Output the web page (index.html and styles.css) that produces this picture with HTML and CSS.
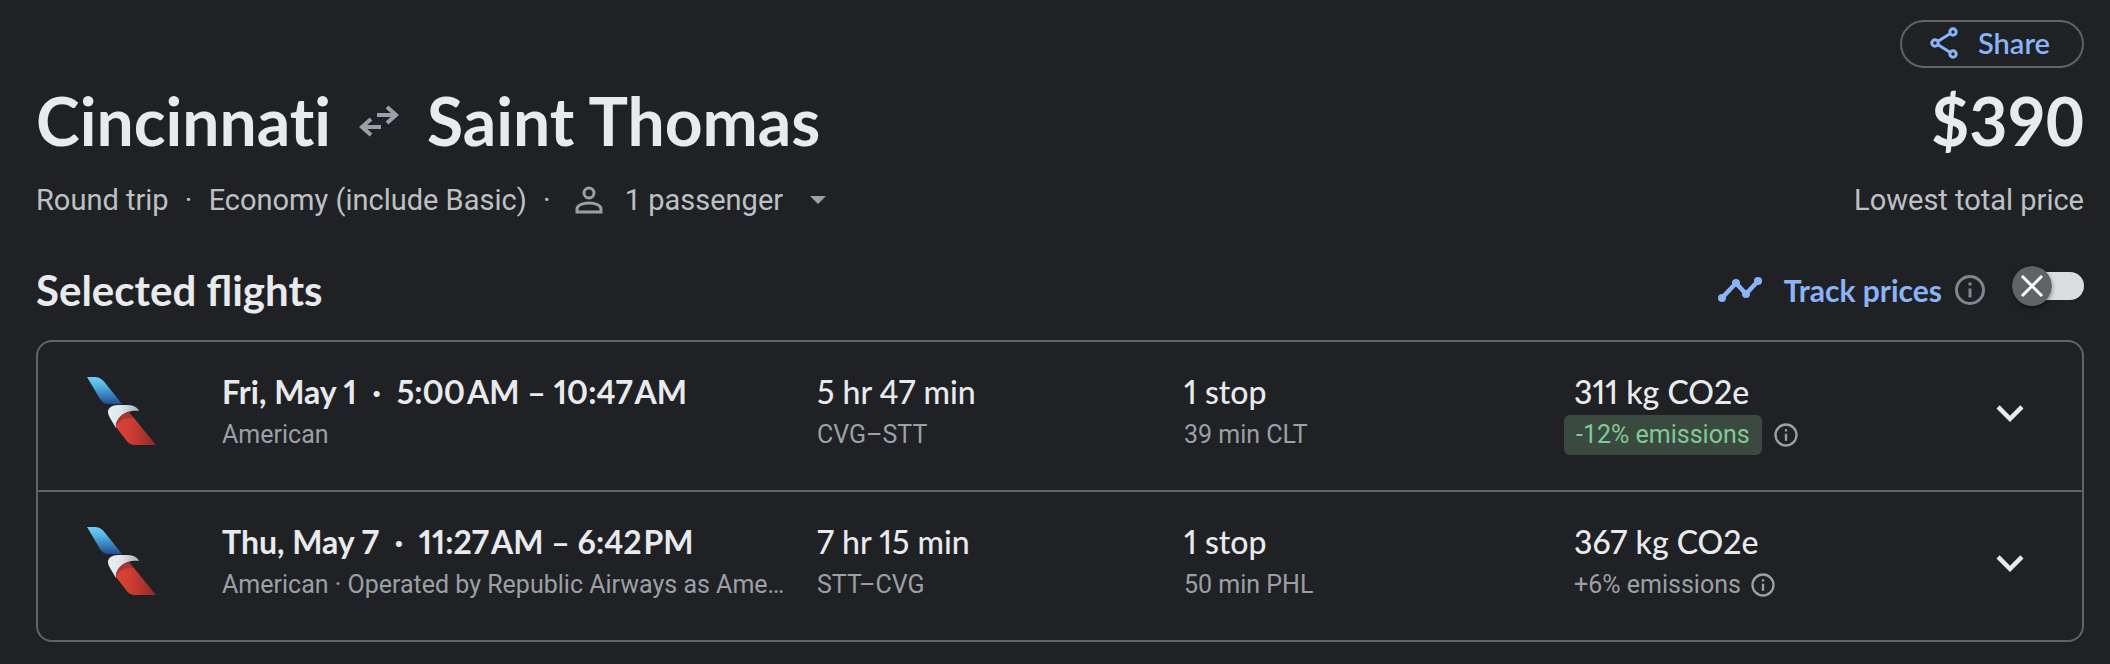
FILE: index.html
```html
<!DOCTYPE html>
<html lang="en">
<head>
<meta charset="utf-8">
<title>Cincinnati to Saint Thomas</title>
<link rel="stylesheet" href="styles.css">
</head>
<body>
<svg class="defs" aria-hidden="true">
  <defs>
    <linearGradient id="tail" x1="0" y1="0" x2="0" y2="1"><stop offset="0" stop-color="#6fcdf5"/><stop offset=".3" stop-color="#56b8e8"/><stop offset="1" stop-color="#1f4f93"/></linearGradient>
    <linearGradient id="beak" x1="0" y1="0" x2="1" y2="0"><stop offset="0" stop-color="#e9edf6"/><stop offset=".4" stop-color="#e1e6ee"/><stop offset="1" stop-color="#a3b0b8"/></linearGradient>
    <linearGradient id="wing" x1="0" y1="0" x2="1" y2="0"><stop offset="0" stop-color="#dc4437"/><stop offset=".4" stop-color="#cb3c33"/><stop offset="1" stop-color="#8c2a28"/></linearGradient>
    <symbol id="logo" viewBox="0 0 70 70">
      <path fill="url(#tail)" d="M1 1h8c5 0 8 3 11 7l16 20H22c-3 0-6-2-8-5z"/>
      <path fill="url(#beak)" d="M22 36c0-4 4-7 10-7h7c7 0 12 1 14 6-9-1-15 2-19 6-3 3-4 7-4 11l-6-10c-1-2-2-4-2-6z"/>
      <path fill="#a93430" d="M30 52c-1-7 4-14 13-16l5 6c-9-1-14 3-18 10z"/>
      <path fill="url(#wing)" d="M30 51c3-6 8-10 18-9l22 27H50c-5 0-8-2-10-5z"/>
    </symbol>
    <symbol id="info" viewBox="0 0 24 24"><path fill="currentColor" d="M11 7h2v2h-2zm0 4h2v6h-2zm1-9a10 10 0 1 0 0 20 10 10 0 0 0 0-20zm0 18a8 8 0 1 1 0-16 8 8 0 0 1 0 16z"/></symbol>
    <symbol id="chevron" viewBox="0 0 24 24"><path fill="currentColor" d="M7.41 8.59 12 13.17l4.59-4.58L18 10l-6 6-6-6z"/></symbol>
  </defs>
</svg>
<main class="page">
  <div class="actions">
    <button class="share" type="button">
      <svg class="share-icon" viewBox="0 0 28 32" aria-hidden="true"><g fill="none" stroke="currentColor" stroke-width="3"><circle cx="5" cy="16" r="3.2"/><circle cx="23" cy="5" r="3.2"/><circle cx="23" cy="27" r="3.2"/><path d="m8 14.300 12-7.500M8 17.700l12 7.500"/></g></svg>
      Share
    </button>
  </div>
  <header class="trip">
    <h1 class="title">Cincinnati
      <svg class="swap" viewBox="0 0 40 32" aria-label="to and from" role="img"><g fill="none" stroke="currentColor" stroke-width="4"><path d="M18 10h19M28 2l9 8-9 8M22 22H3M12 14l-9 8 9 8"/></g></svg>
      Saint Thomas</h1>
    <p class="price">$390</p>
  </header>
  <div class="details">
    <span>Round trip</span><span class="dot">·</span><span>Economy (include Basic)</span><span class="dot">·</span>
    <label class="passengers">
      <svg class="person" viewBox="0 0 28 28" aria-hidden="true"><g fill="none" stroke="currentColor" stroke-width="3"><circle cx="14" cy="7" r="5"/><path d="M2 26v-3c0-4 6-6 12-6s12 2 12 6v3z"/></g></svg>
      <select class="passenger-select" aria-label="Passengers"><option>1 passenger</option></select>
      <svg class="caret" viewBox="0 0 16 8" aria-hidden="true"><path fill="currentColor" d="M0 0h16L8 8z"/></svg>
    </label>
    <span class="price-note">Lowest total price</span>
  </div>
  <div class="section-head">
    <h2 class="heading">Selected flights</h2>
    <div class="track">
      <svg class="trend" viewBox="0 0 44 26" aria-hidden="true"><path fill="none" stroke="currentColor" stroke-width="4.500" d="m4 21 14-15 10 11L40 4"/><g fill="currentColor"><circle cx="4" cy="21" r="4"/><circle cx="18" cy="6" r="4"/><circle cx="28" cy="17" r="4"/><circle cx="40" cy="4" r="4"/></g></svg>
      <label class="track-label" for="track">Track prices</label>
      <svg class="info info-large" role="img" aria-label="About price tracking"><use href="#info"/></svg>
      <span class="switch">
        <input class="switch-input" id="track" type="checkbox" role="switch">
        <svg class="knob" viewBox="0 0 40 40" aria-hidden="true"><circle cx="20" cy="20" r="20" fill="#5f6368"/><path d="m10 10 20 20M30 10 10 30" stroke="#fff" stroke-width="3"/></svg>
      </span>
    </div>
  </div>
  <ul class="flights">
    <li class="flight">
      <svg class="logo" role="img" aria-label="American"><use href="#logo"/></svg>
      <div class="cell"><p class="main strong">Fri, May 1 &nbsp;·&nbsp; 5:00&#8202;AM – 10:47&#8202;AM</p><p class="sub">American</p></div>
      <div class="cell"><p class="main">5 hr 47 min</p><p class="sub">CVG–STT</p></div>
      <div class="cell"><p class="main">1 stop</p><p class="sub">39 min CLT</p></div>
      <div class="cell"><p class="main">311 kg CO2e</p><p class="sub emissions"><span class="badge">-12% emissions</span><svg class="info" role="img" aria-label="About emissions"><use href="#info"/></svg></p></div>
      <button class="expand" type="button" aria-label="Show flight details"><svg class="chevron" aria-hidden="true"><use href="#chevron"/></svg></button>
    </li>
    <li class="flight">
      <svg class="logo" role="img" aria-label="American"><use href="#logo"/></svg>
      <div class="cell"><p class="main strong">Thu, May 7 &nbsp;·&nbsp; 11:27&#8202;AM – 6:42&#8202;PM</p><p class="sub">American · Operated by Republic Airways as Ame…</p></div>
      <div class="cell"><p class="main">7 hr 15 min</p><p class="sub">STT–CVG</p></div>
      <div class="cell"><p class="main">1 stop</p><p class="sub">50 min PHL</p></div>
      <div class="cell"><p class="main">367 kg CO2e</p><p class="sub emissions">+6% emissions<svg class="info" role="img" aria-label="About emissions"><use href="#info"/></svg></p></div>
      <button class="expand" type="button" aria-label="Show flight details"><svg class="chevron" aria-hidden="true"><use href="#chevron"/></svg></button>
    </li>
  </ul>
</main>
</body>
</html>
```
FILE: styles.css
```css
* { box-sizing: border-box; }
body { margin: 0; background: #202124; color: #e8eaed; font-family: Roboto, sans-serif; font-size: 29px; line-height: 40px; }
h1, h2, p, ul { margin: 0; padding: 0; }
button, select { font: inherit; color: inherit; background: none; border: 0; padding: 0; }
svg { flex: none; display: block; }
.defs { position: absolute; width: 0; height: 0; }
.page { padding: 20px 26px 20px 36px; }

.actions { display: flex; justify-content: flex-end; }
.share { display: flex; align-items: center; gap: 20px; height: 48px; padding: 0 32px 2px 28px; border: 2px solid #5f6368; border-radius: 24px; color: #8ab4f8; font-family: Lato, sans-serif; font-weight: 600; }
.share-icon { width: 28px; height: 32px; }

.trip { display: flex; align-items: center; justify-content: space-between; height: 112px; padding-bottom: 6px; }
.title, .price { font-family: Lato, sans-serif; font-size: 66px; line-height: 80px; font-weight: 700; }
.title { display: flex; align-items: center; gap: 28px; font-variant-ligatures: none; }
.swap { width: 40px; height: 32px; color: #9aa0a6; }

.details { display: flex; align-items: center; color: #bdc1c6; }
.dot { width: 40px; text-align: center; }
.passengers { display: flex; align-items: center; gap: 22px; padding-left: 8px; }
.person { width: 28px; height: 28px; color: #9aa0a6; }
.passenger-select { appearance: none; }
.caret { width: 16px; height: 8px; margin-left: 4px; color: #9aa0a6; }
.price-note { margin-left: auto; }

.section-head { display: flex; align-items: center; justify-content: space-between; height: 100px; margin-top: 20px; }
.heading { font-family: Lato, sans-serif; font-size: 42px; line-height: 48px; font-weight: 700; }
.track { display: flex; align-items: center; color: #8ab4f8; }
.trend { width: 44px; height: 26px; }
.track-label { margin: 0 10px 0 22px; font-family: Lato, sans-serif; font-size: 30px; font-weight: 700; }
.info { width: 28px; height: 28px; color: #9aa0a6; }
.info-large { width: 36px; height: 36px; color: #80868b; }
.switch { position: relative; display: flex; align-items: center; width: 72px; height: 40px; margin: 0 0 8px 24px; }
.switch-input { appearance: none; width: 64px; height: 28px; margin: 0 0 0 8px; border-radius: 14px; background: #dadce0; }
.knob { position: absolute; left: 0; top: 0; width: 40px; height: 40px; border-radius: 50%; box-shadow: 0 2px 4px #0006; pointer-events: none; }

.flights { list-style: none; border: 2px solid #5f6368; border-radius: 16px; }
.flight { display: grid; grid-template-columns: 184px 595fr 367fr 390fr 364fr 144px; align-items: start; padding: 30px 0 35px; }
.flight + .flight { border-top: 2px solid #5f6368; }
.logo { width: 70px; height: 70px; margin: 4px 0 0 48px; }
.cell { min-width: 0; padding-right: 20px; }
.main { font-family: Lato, sans-serif; font-size: 32px; line-height: 40px; font-weight: 500; font-variant-numeric: proportional-nums; }
.strong { font-weight: 700; }
.sub { margin-top: 3px; font-size: 25px; line-height: 40px; color: #9aa0a6; white-space: nowrap; overflow: hidden; text-overflow: ellipsis; }
.emissions { display: flex; align-items: center; gap: 8px; overflow: visible; }
.badge { margin: 0 2px 0 -10px; padding: 0 12px; border-radius: 6px; background: #3b4a41; color: #81c995; }
.expand { justify-self: center; margin-top: 14px; }
.chevron { width: 54px; height: 54px; color: #e8eaed; }
```
